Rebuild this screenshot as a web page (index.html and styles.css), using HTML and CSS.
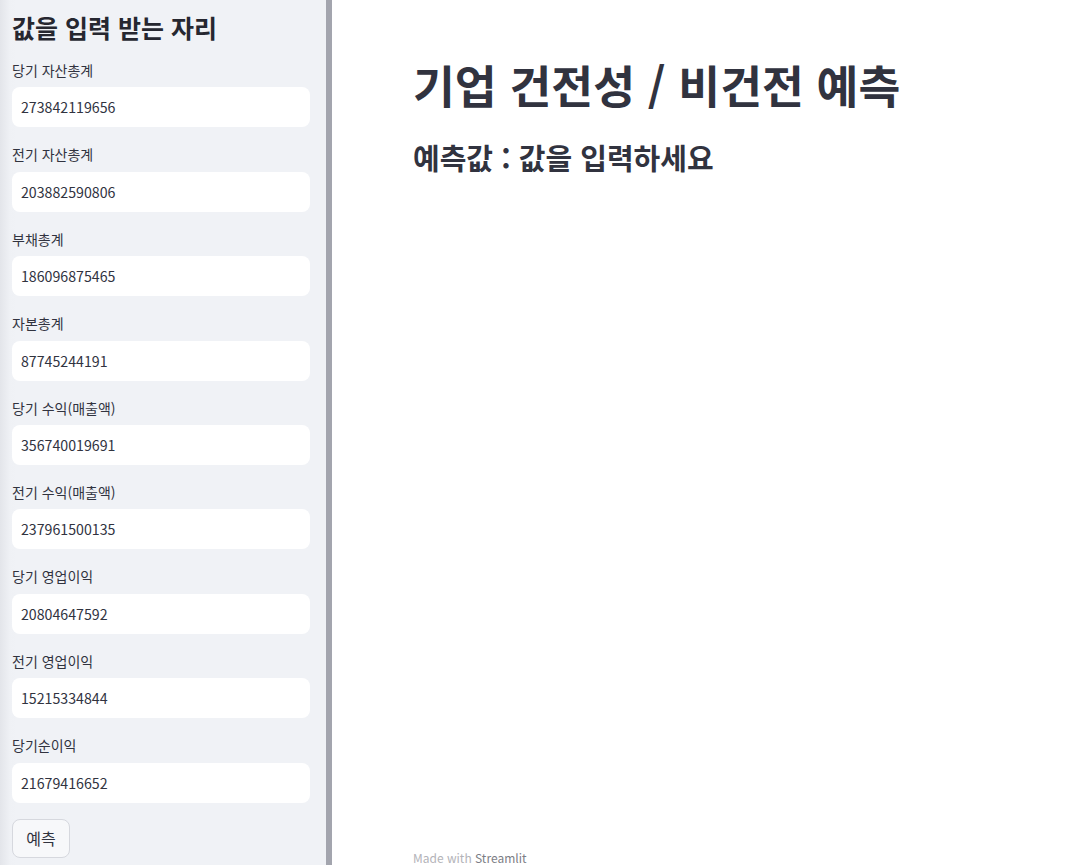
FILE: index.html
```html
<!DOCTYPE html>
<html lang="ko">
<head>
    <meta charset="UTF-8">
    <meta name="viewport" content="width=device-width, initial-scale=1.0">
    <title>기업 건전성 예측</title>
    <link rel="stylesheet" href="styles.css">
</head>
<body>

    <!-- Sidebar with the input fields -->
    <aside class="sidebar">
        <h2>값을 입력 받는 자리</h2>

        <div class="field">
            <label>당기 자산총계</label>
            <input type="text" value="273842119656">
        </div>
        <div class="field">
            <label>전기 자산총계</label>
            <input type="text" value="203882590806">
        </div>
        <div class="field">
            <label>부채총계</label>
            <input type="text" value="186096875465">
        </div>
        <div class="field">
            <label>자본총계</label>
            <input type="text" value="87745244191">
        </div>
        <div class="field">
            <label>당기 수익(매출액)</label>
            <input type="text" value="356740019691">
        </div>
        <div class="field">
            <label>전기 수익(매출액)</label>
            <input type="text" value="237961500135">
        </div>
        <div class="field">
            <label>당기 영업이익</label>
            <input type="text" value="20804647592">
        </div>
        <div class="field">
            <label>전기 영업이익</label>
            <input type="text" value="15215334844">
        </div>
        <div class="field">
            <label>당기순이익</label>
            <input type="text" value="21679416652">
        </div>

        <button class="predict">예측</button>
    </aside>

    <!-- Resize handle between sidebar and main -->
    <div class="divider"></div>

    <!-- Main area -->
    <main class="main">
        <h1>기업 건전성 / 비건전 예측</h1>
        <h3>예측값 : 값을 입력하세요</h3>

        <footer class="footer">Made with <span>Streamlit</span></footer>
    </main>

</body>
</html>
```

FILE: styles.css
```css
* {
    box-sizing: border-box;
}

body {
    margin: 0;
    height: 100vh;
    display: flex;
    overflow: hidden;
    font-family: "Noto Sans CJK KR", "Noto Sans", sans-serif;
    color: #31333f;
    background: #fff;
}

/* Sidebar */
.sidebar {
    width: 326px;
    flex-shrink: 0;
    padding: 12px 16px 0 12px;
    background: linear-gradient(90deg, #e3e5ea 0px, #eff1f5 10px, #f0f2f6 16px);
}

.sidebar h2 {
    margin: 0 0 17px;
    font-size: 25px;
    line-height: 30px;
    font-weight: 700;
    color: #262730;
}

.field {
    margin-bottom: 16px;
}

.field label {
    display: block;
    font-size: 14px;
    line-height: 22.4px;
    margin-bottom: 6px;
    color: #31333f;
}

.field input {
    display: block;
    width: 298px;
    height: 40px;
    padding: 0 9px;
    border: none;
    border-radius: 8px;
    background: #fff;
    font-family: inherit;
    font-size: 14.2px;
    color: #31333f;
    outline: none;
}

.predict {
    width: 58px;
    height: 39px;
    padding: 0;
    border: 1px solid #d6d8de;
    border-radius: 8px;
    background: #f7f8fa;
    font-family: inherit;
    font-size: 16px;
    color: #31333f;
    cursor: pointer;
}

.divider {
    width: 6px;
    flex-shrink: 0;
    background: #a3a5ae;
}

/* Main */
.main {
    flex: 1;
    display: flex;
    flex-direction: column;
    padding: 56px 0 0 81px;
}

.main h1 {
    margin: 0;
    font-size: 45.5px;
    line-height: 56px;
    font-weight: 700;
    color: #31333f;
}

.main h3 {
    margin: 27px 0 0;
    font-size: 29px;
    line-height: 36px;
    font-weight: 700;
    color: #31333f;
}

.footer {
    margin-top: auto;
    height: 14px;
    font-size: 12px;
    line-height: 14px;
    color: #b3b3b8;
}

.footer span {
    color: #7c7d85;
}
```
